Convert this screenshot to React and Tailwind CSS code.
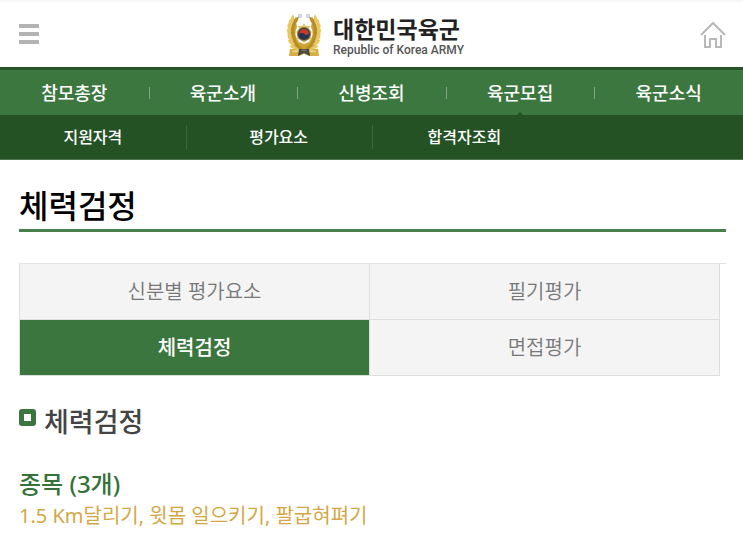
import React, { useState } from 'react';

const mainMenu = ['참모총장', '육군소개', '신병조회', '육군모집', '육군소식'];
const subMenu = ['지원자격', '평가요소', '합격자조회'];
const tabs = ['신분별 평가요소', '필기평가', '체력검정', '면접평가'];

// leaves of the right branch: x, y, rotation
const leaves = [
  [23, 36, 75],
  [26, 33, 55],
  [28, 29, 35],
  [29, 25, 20],
  [30, 20, 8],
  [30, 15, -2],
  [29, 11, -12],
  [27, 7, -22],
];

const Branch = () => (
  <g>
    <path d="M17 38 Q32 37 31 22 Q31 11 25 4 Q25 10 24 14 Q28 22 22 29 L17 31 Z" fill="#cfa536" />
    {leaves.map(([x, y, r]) => (
      <g key={y} transform={`translate(${x} ${y}) rotate(${r})`}>
        <path d="M-2 4 Q-5 0 -3 -5 Q1 -2 0 3 Z" fill="#b98d25" />
        <path d="M0 4 Q-1 -1 3 -5 Q5 0 1 4 Z" fill="#e6c762" />
      </g>
    ))}
  </g>
);

const Emblem = () => (
  <svg viewBox="0 0 34 44" className="w-[34px] h-[44px]" aria-hidden="true">
    <path d="M3 36 L31 36 L32 43 L22 43 L17 41 L12 43 L2 43 Z" fill="#d6b046" />
    <Branch />
    <g transform="translate(34 0) scale(-1 1)">
      <Branch />
    </g>
    <path d="M5 39 L12 38 M22 38 L29 39" stroke="#f1dc8c" strokeWidth="1" />
    <path d="M12 36 H22 L23 43 L17 40 L11 43 Z" fill="#4a4845" />
    <path d="M14 38 L17 37 L20 38" fill="none" stroke="#85807a" strokeWidth="1" />
    <circle cx="13" cy="3" r="2" fill="#bcc3cb" />
    <circle cx="21" cy="3" r="2" fill="#bcc3cb" />
    <circle cx="13" cy="3" r="1" fill="#e4e7ea" />
    <circle cx="21" cy="3" r="1" fill="#e4e7ea" />
    <path d="M17 10 L19 13 L23 13 L22 16 L25 19 L23 22 L24 26 L20 27 L17 30 L14 27 L10 26 L11 22 L9 19 L12 16 L11 13 L15 13 Z" fill="#e0c571" />
    <circle cx="17" cy="21" r="7" fill="#8a733f" />
    <circle cx="17" cy="21" r="6" fill="#3e3836" />
    <path d="M12 21 A5 5 0 0 1 22 21 Q19 23 17 21 T12 21 Z" fill="#c23b2d" />
    <path d="M12 21 A5 5 0 0 0 22 21 Q19 23 17 21 T12 21 Z" fill="#26345a" />
  </svg>
);

const Header = () => (
  <header className="flex items-center justify-between h-[67px] pl-[19px] pr-[17px] border-t-2 border-[#f7f7f7]">
    <button type="button" aria-label="메뉴" className="flex flex-col gap-1 w-8 pb-0.5 cursor-pointer">
      <span className="w-5 h-1 bg-[#b3b3b3]" />
      <span className="w-5 h-1 bg-[#b3b3b3]" />
      <span className="w-5 h-1 bg-[#b3b3b3]" />
    </button>
    <a href="#home" className="flex items-center gap-3">
      <Emblem />
      <span className="flex flex-col gap-0.5 pt-0.5">
        <span className="text-[23px] leading-[26px] font-bold text-[#222]">대한민국육군</span>
        <span className="text-[12px] leading-3 font-medium text-[#555] font-[Roboto,sans-serif]">
          Republic of Korea ARMY
        </span>
      </span>
    </a>
    <a href="#home" aria-label="홈">
      <svg viewBox="0 0 26 28" className="w-[26px] h-[28px]" fill="none" stroke="#b8b8b8" strokeWidth="2">
        <path d="M1 14 L13 2 L25 14" />
        <path d="M5 14 V26 H10 V18 H16 V26 H21 V14" />
      </svg>
    </a>
  </header>
);

const App = () => {
  const [active, setActive] = useState('체력검정');

  return (
    <div className="bg-white font-['Noto_Sans','Noto_Sans_CJK_KR',sans-serif]">
      <Header />

      <nav className="text-white font-medium">
        <ul className="grid grid-cols-5 h-12 border-t-3 border-[#255226] bg-[#3b773e]">
          {mainMenu.map((item, i) => (
            <li key={item} className="relative flex items-center justify-center text-[18px] leading-6">
              {i > 0 && <span className="absolute left-0 h-3 w-px bg-[#7fa881]" />}
              <a href="#menu">{item}</a>
              {item === '육군모집' && (
                <span className="absolute bottom-0 size-0 border-x-3 border-b-3 border-x-transparent border-b-[#245225]" />
              )}
            </li>
          ))}
        </ul>
        <ul className="grid grid-cols-4 h-[45px] bg-[#245225] border-b border-[#4f7550]">
          {subMenu.map((item, i) => (
            <li key={item} className="relative flex items-center justify-center text-[16px] leading-6">
              {i > 0 && <span className="absolute left-0 h-6 w-px bg-[#3c673d]" />}
              <a href="#sub">{item}</a>
            </li>
          ))}
        </ul>
      </nav>

      <main className="pl-[19px] pr-[17px] pb-2">
        <h1 className="pt-6 pb-px text-[32px] leading-[44px] font-medium text-black border-b-3 border-[#46804a]">
          체력검정
        </h1>

        <div className="mt-[31px] border-t border-[#e2e2e2]">
          <div role="tablist" className="grid grid-cols-2 mr-1.5 border-l border-[#dedede]">
            {tabs.map((tab) => (
              <button
                key={tab}
                type="button"
                role="tab"
                aria-selected={tab === active}
                onClick={() => setActive(tab)}
                className={
                  'h-14 text-[20px] leading-6 border-r border-b border-[#dedede] cursor-pointer ' +
                  (tab === active ? 'bg-[#3b763e] text-white font-medium' : 'bg-[#f4f4f4] text-[#777] font-[350]')
                }
              >
                {tab}
              </button>
            ))}
          </div>
        </div>

        <h2 className="flex items-start gap-2 mt-6 text-[27px] leading-[44px] font-medium text-[#444]">
          <span className="size-[17px] mt-[9px] border-5 border-[#3b763e] rounded-[3px]" />
          체력검정
        </h2>
        <h3 className="mt-6 text-[24px] leading-8 font-medium text-[#35723a]">종목 (3개)</h3>
        <p className="text-[20px] leading-8 font-normal text-[#d3a746]">1.5 Km달리기, 윗몸 일으키기, 팔굽혀펴기</p>
      </main>
    </div>
  );
};

export default App;
